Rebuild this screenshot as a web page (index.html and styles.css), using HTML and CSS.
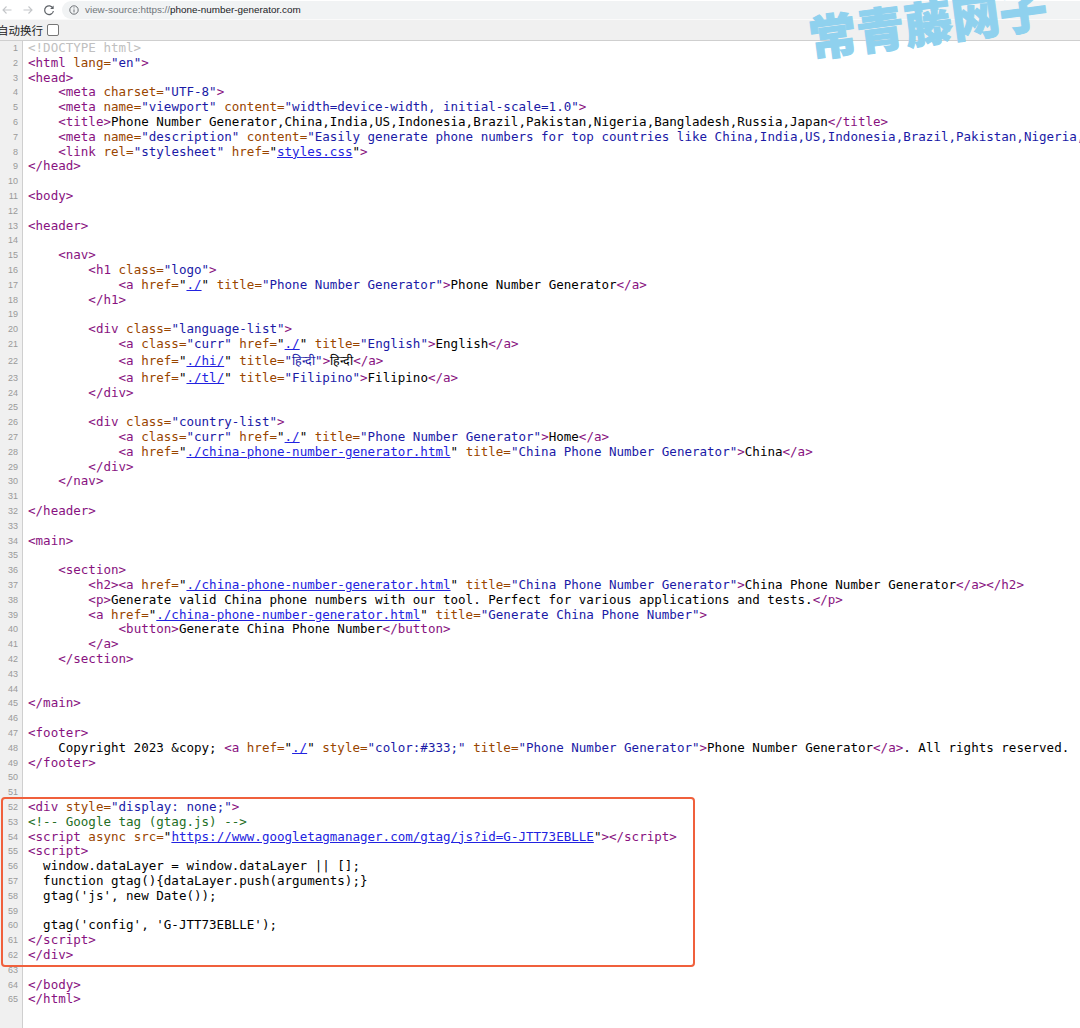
FILE: index.html
```html
<!DOCTYPE html>
<html lang="zh">
<head>
<meta charset="UTF-8">
<title>view-source</title>
<link rel="stylesheet" href="styles.css">
</head>
<body>
<div class="toolbar">
  <svg class="nav" viewBox="0 0 12 12"><path d="M10.5 6H2M5.5 2.5 2 6l3.5 3.5" class="arrow"/></svg>
  <svg class="nav" viewBox="0 0 12 12"><path d="M1.5 6H10M6.5 2.5 10 6l-3.5 3.5" class="arrow"/></svg>
  <svg class="nav" viewBox="0 0 12 12"><path d="M10 4.2A4.4 4.4 0 1 0 10.4 7" class="reload"/><path d="M10.6 1.4v3.5H7.1z" class="reload-head"/></svg>
  <div class="address">
    <svg class="info" viewBox="0 0 10 10"><circle cx="5" cy="5" r="4.2"/><path d="M5 4.4v3M5 2.4v1"/></svg>
    <span class="scheme">view-source:https://</span><span class="host">phone-number-generator.com</span>
  </div>
</div>
<div class="infobar"><span class="wrap-label">自动换行</span><span class="checkbox"></span></div>
<div class="watermark">常青藤网子</div>
<main class="source">
<div class="row"><span class="num">1</span><code class="doc">&lt;!DOCTYPE html&gt;</code></div>
<div class="row"><span class="num">2</span><code><b>&lt;html</b> <i>lang=</i><u>"en"</u><b>&gt;</b></code></div>
<div class="row"><span class="num">3</span><code><b>&lt;head&gt;</b></code></div>
<div class="row"><span class="num">4</span><code>    <b>&lt;meta</b> <i>charset=</i><u>"UTF-8"</u><b>&gt;</b></code></div>
<div class="row"><span class="num">5</span><code>    <b>&lt;meta</b> <i>name=</i><u>"viewport"</u> <i>content=</i><u>"width=device-width, initial-scale=1.0"</u><b>&gt;</b></code></div>
<div class="row"><span class="num">6</span><code>    <b>&lt;title&gt;</b>Phone Number Generator,China,India,US,Indonesia,Brazil,Pakistan,Nigeria,Bangladesh,Russia,Japan<b>&lt;/title&gt;</b></code></div>
<div class="row"><span class="num">7</span><code>    <b>&lt;meta</b> <i>name=</i><u>"description"</u> <i>content=</i><u>"Easily generate phone numbers for top countries like China,India,US,Indonesia,Brazil,Pakistan,Nigeria,Bangladesh,Russia,Japan"</u><b>&gt;</b></code></div>
<div class="row"><span class="num">8</span><code>    <b>&lt;link</b> <i>rel=</i><u>"stylesheet"</u> <i>href=</i>"<a>styles.css</a>"<b>&gt;</b></code></div>
<div class="row"><span class="num">9</span><code><b>&lt;/head&gt;</b></code></div>
<div class="row"><span class="num">10</span><code></code></div>
<div class="row"><span class="num">11</span><code><b>&lt;body&gt;</b></code></div>
<div class="row"><span class="num">12</span><code></code></div>
<div class="row"><span class="num">13</span><code><b>&lt;header&gt;</b></code></div>
<div class="row"><span class="num">14</span><code></code></div>
<div class="row"><span class="num">15</span><code>    <b>&lt;nav&gt;</b></code></div>
<div class="row"><span class="num">16</span><code>        <b>&lt;h1</b> <i>class=</i><u>"logo"</u><b>&gt;</b></code></div>
<div class="row"><span class="num">17</span><code>            <b>&lt;a</b> <i>href=</i>"<a>./</a>" <i>title=</i><u>"Phone Number Generator"</u><b>&gt;</b>Phone Number Generator<b>&lt;/a&gt;</b></code></div>
<div class="row"><span class="num">18</span><code>        <b>&lt;/h1&gt;</b></code></div>
<div class="row"><span class="num">19</span><code></code></div>
<div class="row"><span class="num">20</span><code>        <b>&lt;div</b> <i>class=</i><u>"language-list"</u><b>&gt;</b></code></div>
<div class="row"><span class="num">21</span><code>            <b>&lt;a</b> <i>class=</i><u>"curr"</u> <i>href=</i>"<a>./</a>" <i>title=</i><u>"English"</u><b>&gt;</b>English<b>&lt;/a&gt;</b></code></div>
<div class="row row-tall"><span class="num">22</span><code>            <b>&lt;a</b> <i>href=</i>"<a>./hi/</a>" <i>title=</i><u>"हिन्दी"</u><b>&gt;</b>हिन्दी<b>&lt;/a&gt;</b></code></div>
<div class="row"><span class="num">23</span><code>            <b>&lt;a</b> <i>href=</i>"<a>./tl/</a>" <i>title=</i><u>"Filipino"</u><b>&gt;</b>Filipino<b>&lt;/a&gt;</b></code></div>
<div class="row"><span class="num">24</span><code>        <b>&lt;/div&gt;</b></code></div>
<div class="row"><span class="num">25</span><code></code></div>
<div class="row"><span class="num">26</span><code>        <b>&lt;div</b> <i>class=</i><u>"country-list"</u><b>&gt;</b></code></div>
<div class="row"><span class="num">27</span><code>            <b>&lt;a</b> <i>class=</i><u>"curr"</u> <i>href=</i>"<a>./</a>" <i>title=</i><u>"Phone Number Generator"</u><b>&gt;</b>Home<b>&lt;/a&gt;</b></code></div>
<div class="row"><span class="num">28</span><code>            <b>&lt;a</b> <i>href=</i>"<a>./china-phone-number-generator.html</a>" <i>title=</i><u>"China Phone Number Generator"</u><b>&gt;</b>China<b>&lt;/a&gt;</b></code></div>
<div class="row"><span class="num">29</span><code>        <b>&lt;/div&gt;</b></code></div>
<div class="row"><span class="num">30</span><code>    <b>&lt;/nav&gt;</b></code></div>
<div class="row"><span class="num">31</span><code></code></div>
<div class="row"><span class="num">32</span><code><b>&lt;/header&gt;</b></code></div>
<div class="row"><span class="num">33</span><code></code></div>
<div class="row"><span class="num">34</span><code><b>&lt;main&gt;</b></code></div>
<div class="row"><span class="num">35</span><code></code></div>
<div class="row"><span class="num">36</span><code>    <b>&lt;section&gt;</b></code></div>
<div class="row"><span class="num">37</span><code>        <b>&lt;h2&gt;&lt;a</b> <i>href=</i>"<a>./china-phone-number-generator.html</a>" <i>title=</i><u>"China Phone Number Generator"</u><b>&gt;</b>China Phone Number Generator<b>&lt;/a&gt;&lt;/h2&gt;</b></code></div>
<div class="row"><span class="num">38</span><code>        <b>&lt;p&gt;</b>Generate valid China phone numbers with our tool. Perfect for various applications and tests.<b>&lt;/p&gt;</b></code></div>
<div class="row"><span class="num">39</span><code>        <b>&lt;a</b> <i>href=</i>"<a>./china-phone-number-generator.html</a>" <i>title=</i><u>"Generate China Phone Number"</u><b>&gt;</b></code></div>
<div class="row"><span class="num">40</span><code>            <b>&lt;button&gt;</b>Generate China Phone Number<b>&lt;/button&gt;</b></code></div>
<div class="row"><span class="num">41</span><code>        <b>&lt;/a&gt;</b></code></div>
<div class="row"><span class="num">42</span><code>    <b>&lt;/section&gt;</b></code></div>
<div class="row"><span class="num">43</span><code></code></div>
<div class="row"><span class="num">44</span><code></code></div>
<div class="row"><span class="num">45</span><code><b>&lt;/main&gt;</b></code></div>
<div class="row"><span class="num">46</span><code></code></div>
<div class="row"><span class="num">47</span><code><b>&lt;footer&gt;</b></code></div>
<div class="row"><span class="num">48</span><code>    Copyright 2023 &amp;copy; <b>&lt;a</b> <i>href=</i>"<a>./</a>" <i>style=</i><u>"color:#333;"</u> <i>title=</i><u>"Phone Number Generator"</u><b>&gt;</b>Phone Number Generator<b>&lt;/a&gt;</b>. All rights reserved.</code></div>
<div class="row"><span class="num">49</span><code><b>&lt;/footer&gt;</b></code></div>
<div class="row"><span class="num">50</span><code></code></div>
<div class="row"><span class="num">51</span><code></code></div>
<div class="row"><span class="num">52</span><code><b>&lt;div</b> <i>style=</i><u>"display: none;"</u><b>&gt;</b></code></div>
<div class="row"><span class="num">53</span><code class="comment">&lt;!-- Google tag (gtag.js) --&gt;</code></div>
<div class="row"><span class="num">54</span><code><b>&lt;script</b> <i>async</i> <i>src=</i>"<a>https://www.googletagmanager.com/gtag/js?id=G-JTT73EBLLE</a>"<b>&gt;&lt;/script&gt;</b></code></div>
<div class="row"><span class="num">55</span><code><b>&lt;script&gt;</b></code></div>
<div class="row"><span class="num">56</span><code>  window.dataLayer = window.dataLayer || [];</code></div>
<div class="row"><span class="num">57</span><code>  function gtag(){dataLayer.push(arguments);}</code></div>
<div class="row"><span class="num">58</span><code>  gtag('js', new Date());</code></div>
<div class="row"><span class="num">59</span><code></code></div>
<div class="row"><span class="num">60</span><code>  gtag('config', 'G-JTT73EBLLE');</code></div>
<div class="row"><span class="num">61</span><code><b>&lt;/script&gt;</b></code></div>
<div class="row"><span class="num">62</span><code><b>&lt;/div&gt;</b></code></div>
<div class="row"><span class="num">63</span><code></code></div>
<div class="row"><span class="num">64</span><code><b>&lt;/body&gt;</b></code></div>
<div class="row"><span class="num">65</span><code><b>&lt;/html&gt;</b></code></div>
<div class="highlight"></div>
</main>
</body>
</html>
```
FILE: styles.css
```css
html, body {
  margin: 0;
  height: 100%;
  overflow: hidden;
  background: #fff;
}
body {
  position: relative;
  display: flex;
  flex-direction: column;
  width: 1080px;
  height: 1028px;
}
.toolbar {
  height: 19px;
  flex: none;
  display: flex;
  align-items: center;
  gap: 7px;
  padding-left: 1px;
  background: #fff;
  box-sizing: border-box;
}
.nav {
  width: 12px;
  height: 12px;
  margin-right: 2px;
  flex: none;
}
.arrow {
  fill: none;
  stroke: #c4c6c9;
  stroke-width: 1.1;
}
.reload {
  fill: none;
  stroke: #5f6368;
  stroke-width: 1.2;
}
.reload-head {
  fill: #5f6368;
}
.address {
  flex: 1;
  height: 18px;
  margin-left: -2px;
  display: flex;
  align-items: center;
  padding-left: 7px;
  border-radius: 9px 0 0 9px;
  background: #f1f3f4;
  font: 9.9px "Liberation Sans", Arial, sans-serif;
}
.info {
  width: 10px;
  height: 10px;
  margin-right: 6px;
  fill: none;
  stroke: #5f6368;
  stroke-width: 0.9;
}
.scheme {
  color: #70757a;
}
.host {
  color: #202124;
}
.infobar {
  height: 22px;
  flex: none;
  display: flex;
  align-items: center;
  gap: 4px;
  background: #f0f0f0;
  border-top: 1px solid #fafafa;
  border-bottom: 1px solid #cfcfcf;
  box-sizing: border-box;
  font: 11.5px "Noto Sans CJK SC", sans-serif;
  color: #222;
}
.wrap-label {
  margin-left: -3px;
}
.checkbox {
  width: 10px;
  height: 10px;
  border: 1px solid #767676;
  border-radius: 2px;
  background: #fff;
}
.watermark {
  position: absolute;
  left: 812px;
  top: 11px;
  transform: rotate(-7.5deg);
  transform-origin: left bottom;
  font: 900 48px/50px "Noto Sans CJK SC", sans-serif;
  -webkit-text-stroke: 1px #8fd1ee;
  color: #8fd1ee;
  white-space: nowrap;
  z-index: 2;
}
.source {
  position: relative;
  flex: 1;
  background: linear-gradient(to right, #f0f0f0 22px, #cfcfcf 22px, #cfcfcf 23px, #fff 23px);
  overflow: hidden;
}
.row {
  display: flex;
  height: 14.8px;
  line-height: 14.8px;
  white-space: pre;
}
.row-tall {
  height: 19.1px;
  align-items: center;
}
.num {
  width: 18px;
  flex: none;
  text-align: right;
  font: 9px/15px "Liberation Sans", Arial, sans-serif;
  color: #9a9a9a;
}
code {
  margin-left: 10px;
  font: 12.54px/14.8px "DejaVu Sans Mono", monospace;
  color: #000;
}
code b {
  font-weight: 400;
  color: #881280;
}
code i {
  font-style: normal;
  color: #994500;
}
code u {
  text-decoration: none;
  color: #1a1aa6;
}
code a {
  color: #2222e0;
  text-decoration: underline;
}
.doc {
  color: #c0c0c0;
}
.comment {
  color: #236e25;
}
.highlight {
  position: absolute;
  left: 1px;
  top: 756px;
  width: 690px;
  height: 166px;
  border: 2px solid #f0603c;
  border-radius: 4px;
}
```
